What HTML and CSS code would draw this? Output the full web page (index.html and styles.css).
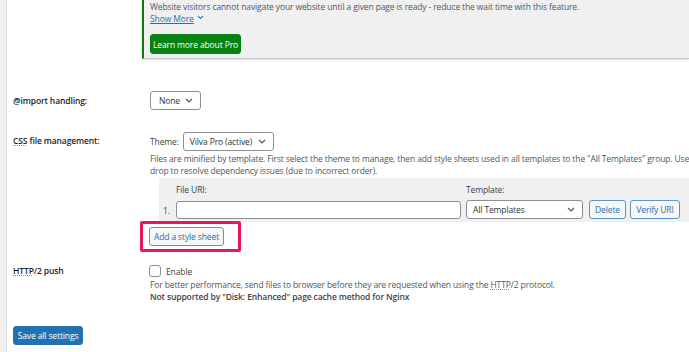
FILE: index.html
```html
<!DOCTYPE html>
<html lang="en">
<head>
<meta charset="utf-8">
<title>Minify settings</title>
<link rel="stylesheet" href="styles.css">
</head>
<body>
<div class="screen">
  <aside class="rail"></aside>
  <main class="content">
    <section class="promo">
      <p class="promo-text">Website visitors cannot navigate your website until a given page is ready - reduce the wait time with this feature.</p>
      <a class="show-more" href="#">Show More<svg class="chev-link" width="7" height="5" viewBox="0 0 7 5"><path d="M1 1.2 L3.5 3.6 L6 1.2" fill="none" stroke="currentColor" stroke-width="1.1"/></svg></a>
      <div><button class="btn btn-pro">Learn more about Pro</button></div>
    </section>

    <div class="row row-import">
      <div class="label">@import handling:</div>
      <div class="field">
        <div class="select select-none"><span>None</span><svg class="chev" width="8" height="5" viewBox="0 0 8 5"><path d="M1 1 L4 4 L7 1" fill="none" stroke="#50575e" stroke-width="1.2"/></svg></div>
      </div>
    </div>

    <div class="row row-css">
      <div class="label label-top"><abbr title="Cascading Style Sheets">CSS</abbr> file management:</div>
      <div class="field">
        <div class="theme-line">
          <span>Theme:</span>
          <div class="select select-theme"><span>Vilva Pro (active)</span><svg class="chev" width="8" height="5" viewBox="0 0 8 5"><path d="M1 1 L4 4 L7 1" fill="none" stroke="#50575e" stroke-width="1.2"/></svg></div>
        </div>
        <p class="desc"><span class="line">Files are minified by template. First select the theme to manage, then add style sheets used in all templates to the "All Templates" group. Use drag and</span><span class="line">drop to resolve dependency issues (due to incorrect order).</span></p>
        <div class="files">
          <span></span><span class="head">File URI:</span><span class="head">Template:</span><span></span><span></span>
          <span class="num">1.</span>
          <div class="input"></div>
          <div class="select select-tpl"><span>All Templates</span><svg class="chev" width="8" height="5" viewBox="0 0 8 5"><path d="M1 1 L4 4 L7 1" fill="none" stroke="#50575e" stroke-width="1.2"/></svg></div>
          <button class="btn btn-sec btn-delete">Delete</button>
          <button class="btn btn-sec btn-verify">Verify URI</button>
        </div>
        <div class="add-wrap"><button class="btn btn-sec btn-add">Add a style sheet</button></div>
      </div>
    </div>

    <div class="row row-http">
      <div class="label"><abbr title="Hypertext Transfer Protocol">HTTP</abbr>/2 push</div>
      <div class="field">
        <label class="check-line"><span class="checkbox"></span><span>Enable</span></label>
        <p class="desc desc-http"><span class="line">For better performance, send files to browser before they are requested when using the <abbr title="Hypertext Transfer Protocol">HTTP</abbr>/2 protocol.</span><span class="line strong">Not supported by "Disk: Enhanced" page cache method for Nginx</span></p>
      </div>
    </div>

    <button class="btn btn-primary">Save all settings</button>
  </main>
</div>
</body>
</html>
```

FILE: styles.css
```css
html, body {
  margin: 0;
  padding: 0;
  background: #fff;
  overflow: hidden;
}

body {
  font-family: "Open Sans", "Noto Sans", sans-serif;
  font-size: 8.5px;
  letter-spacing: -0.12px;
  color: #3c434a;
}

.screen {
  display: flex;
  width: 689px;
  height: 352px;
  overflow: hidden;
}

.rail {
  flex: 0 0 6px;
  background: #f0f0f1;
  border-right: 1px solid #dcdcde;
}

.content {
  flex: 1;
  min-width: 0;
  padding-left: 6px;
}

/* promo box */
.promo {
  margin-left: 129px;
  background: #f0f0f1;
  border-left: 2px solid #0a7d12;
  border-bottom: 1px solid #c3c4c7;
  box-shadow: 0 1px 2px rgba(0, 0, 0, 0.15);
  padding: 1px 0 4px 6px;
  white-space: nowrap;
}

.promo-text {
  margin: 0;
  line-height: 11.5px;
  color: #50575e;
}

.show-more {
  display: inline-block;
  line-height: 11.5px;
  color: #2271b1;
  text-decoration: underline;
}

.chev-link {
  margin-left: 3px;
  vertical-align: 2px;
}

.btn {
  font-family: inherit;
  font-size: 8.5px;
  letter-spacing: -0.12px;
  border-radius: 3px;
  cursor: pointer;
  padding: 0;
  height: 19px;
  line-height: 17px;
  white-space: nowrap;
}

.btn-pro {
  margin-top: 10px;
  height: 20px;
  width: 91px;
  background: #078112;
  color: #fff;
  border: 1px solid #078112;
}

/* rows */
.row {
  display: grid;
  grid-template-columns: 137px 1fr;
}

.label {
  font-weight: 600;
  color: #1d2327;
  line-height: 19px;
}

abbr {
  text-decoration: underline dotted #8c8f94;
  text-underline-offset: 1px;
}

.row-import {
  margin-top: 32px;
}

.row-css {
  margin-top: 22px;
}

.label-top {
  line-height: 17px;
}

.select {
  display: flex;
  align-items: center;
  justify-content: space-between;
  box-sizing: border-box;
  height: 19px;
  padding: 0 7px 0 8px;
  background: #fff;
  border: 1px solid #8c8f94;
  border-radius: 3px;
  color: #2c3338;
}

.select-none {
  width: 51px;
}

.theme-line {
  display: flex;
  align-items: center;
  gap: 4px;
}

.select-theme {
  width: 91px;
  padding-left: 6px;
}

.desc {
  margin: 2px 0 0;
  line-height: 12px;
  color: #50575e;
}

.line {
  display: block;
  white-space: nowrap;
}

.strong {
  font-weight: 600;
  color: #3c434a;
}

/* file table */
.files {
  display: grid;
  grid-template-columns: 8px 285px 117px 37px 50px;
  justify-content: start;
  column-gap: 5px;
  row-gap: 4px;
  align-items: center;
  margin: 1px 0 0 9px;
  padding: 6px 0 3px 4px;
  background: #f0f0f1;
  color: #3c434a;
}

.files .head {
  line-height: 12px;
}

.files .num {
  line-height: 12px;
  padding-top: 2px;
}

.input {
  box-sizing: border-box;
  height: 18px;
  width: 285px;
  background: #fff;
  border: 1px solid #8c8f94;
  border-radius: 3px;
}

.select-tpl {
  height: 19px;
  padding-left: 6px;
}

.btn-sec {
  background: #f6f7f7;
  border: 1px solid #5d95c4;
  color: #2271b1;
}

.btn-delete {
  width: 37px;
  margin-left: 1px;
}

.btn-verify {
  width: 50px;
}

.add-wrap {
  position: relative;
  width: 75px;
  margin: 5px 0 0 -1px;
}

.add-wrap::after {
  content: "";
  position: absolute;
  left: -9px;
  right: -17px;
  top: -6px;
  bottom: -6px;
  border: 3px solid #e8175d;
  border-radius: 2px;
  pointer-events: none;
}

.btn-add {
  display: block;
  width: 75px;
}

/* http row */
.row-http {
  margin-top: 18px;
}

.row-http .label {
  line-height: 14px;
}

.check-line {
  display: flex;
  align-items: center;
  gap: 5px;
  height: 14px;
  color: #3c434a;
}

.checkbox {
  box-sizing: border-box;
  width: 12px;
  height: 12px;
  margin-left: -1px;
  border: 1px solid #8c8f94;
  border-radius: 3px;
  background: #fff;
}

.desc-http {
  margin-top: 1px;
}

.btn-primary {
  display: block;
  margin-top: 23px;
  width: 70px;
  background: #2271b1;
  border: 1px solid #2271b1;
  color: #fff;
}
```
